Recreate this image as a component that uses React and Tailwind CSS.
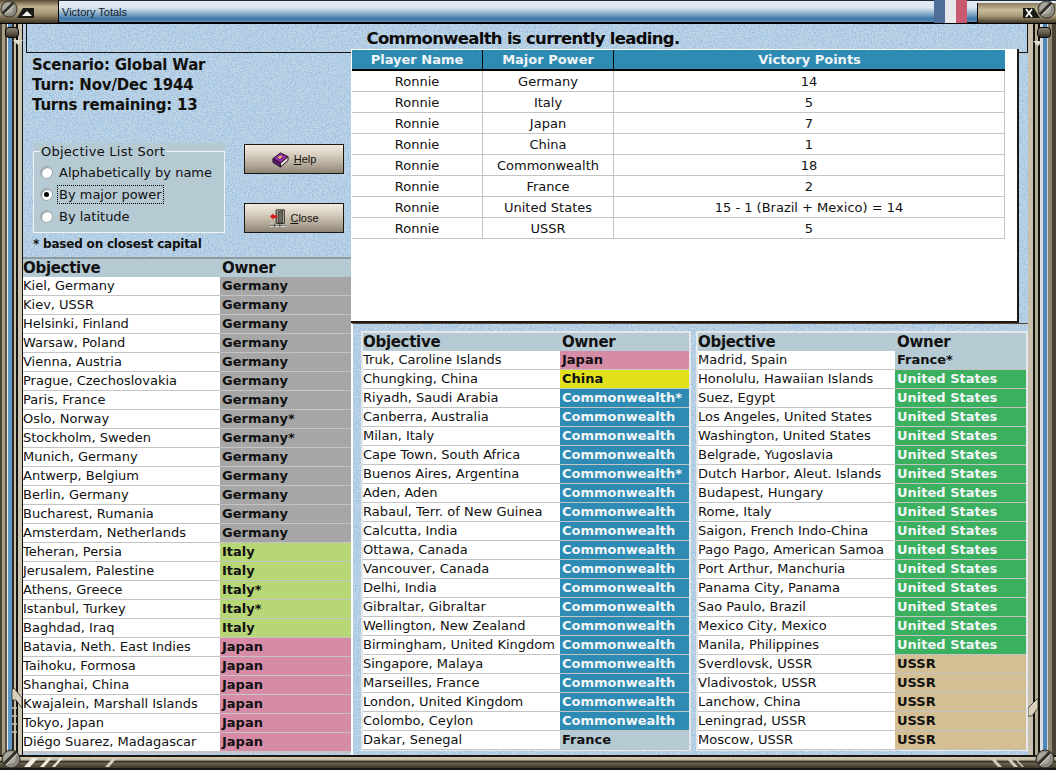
import { useId } from 'react';

const GER = 'bg-[#a6a6a6] text-[#111]';
const ITA = 'bg-[#b7d676] text-[#111]';
const JAP = 'bg-[#d68ca6] text-[#111]';
const CHI = 'bg-[#e2e21c] text-[#111]';
const COM = 'bg-[#2e8bb3] text-[#f2f6f8]';
const FRA = 'bg-[#b5cad3] text-[#111]';
const USA = 'bg-[#3bb05e] text-[#f2f6f8]';
const SOV = 'bg-[#d4bf94] text-[#111]';

const leftRows = [
  ['Kiel, Germany', 'Germany', GER],
  ['Kiev, USSR', 'Germany', GER],
  ['Helsinki, Finland', 'Germany', GER],
  ['Warsaw, Poland', 'Germany', GER],
  ['Vienna, Austria', 'Germany', GER],
  ['Prague, Czechoslovakia', 'Germany', GER],
  ['Paris, France', 'Germany', GER],
  ['Oslo, Norway', 'Germany*', GER],
  ['Stockholm, Sweden', 'Germany*', GER],
  ['Munich, Germany', 'Germany', GER],
  ['Antwerp, Belgium', 'Germany', GER],
  ['Berlin, Germany', 'Germany', GER],
  ['Bucharest, Rumania', 'Germany', GER],
  ['Amsterdam, Netherlands', 'Germany', GER],
  ['Teheran, Persia', 'Italy', ITA],
  ['Jerusalem, Palestine', 'Italy', ITA],
  ['Athens, Greece', 'Italy*', ITA],
  ['Istanbul, Turkey', 'Italy*', ITA],
  ['Baghdad, Iraq', 'Italy', ITA],
  ['Batavia, Neth. East Indies', 'Japan', JAP],
  ['Taihoku, Formosa', 'Japan', JAP],
  ['Shanghai, China', 'Japan', JAP],
  ['Kwajalein, Marshall Islands', 'Japan', JAP],
  ['Tokyo, Japan', 'Japan', JAP],
  ['Diégo Suarez, Madagascar', 'Japan', JAP],
];

const midRows = [
  ['Truk, Caroline Islands', 'Japan', JAP],
  ['Chungking, China', 'China', CHI],
  ['Riyadh, Saudi Arabia', 'Commonwealth*', COM],
  ['Canberra, Australia', 'Commonwealth', COM],
  ['Milan, Italy', 'Commonwealth', COM],
  ['Cape Town, South Africa', 'Commonwealth', COM],
  ['Buenos Aires, Argentina', 'Commonwealth*', COM],
  ['Aden, Aden', 'Commonwealth', COM],
  ['Rabaul, Terr. of New Guinea', 'Commonwealth', COM],
  ['Calcutta, India', 'Commonwealth', COM],
  ['Ottawa, Canada', 'Commonwealth', COM],
  ['Vancouver, Canada', 'Commonwealth', COM],
  ['Delhi, India', 'Commonwealth', COM],
  ['Gibraltar, Gibraltar', 'Commonwealth', COM],
  ['Wellington, New Zealand', 'Commonwealth', COM],
  ['Birmingham, United Kingdom', 'Commonwealth', COM],
  ['Singapore, Malaya', 'Commonwealth', COM],
  ['Marseilles, France', 'Commonwealth', COM],
  ['London, United Kingdom', 'Commonwealth', COM],
  ['Colombo, Ceylon', 'Commonwealth', COM],
  ['Dakar, Senegal', 'France', FRA],
];

const rightRows = [
  ['Madrid, Spain', 'France*', FRA],
  ['Honolulu, Hawaiian Islands', 'United States', USA],
  ['Suez, Egypt', 'United States', USA],
  ['Los Angeles, United States', 'United States', USA],
  ['Washington, United States', 'United States', USA],
  ['Belgrade, Yugoslavia', 'United States', USA],
  ['Dutch Harbor, Aleut. Islands', 'United States', USA],
  ['Budapest, Hungary', 'United States', USA],
  ['Rome, Italy', 'United States', USA],
  ['Saigon, French Indo-China', 'United States', USA],
  ['Pago Pago, American Samoa', 'United States', USA],
  ['Port Arthur, Manchuria', 'United States', USA],
  ['Panama City, Panama', 'United States', USA],
  ['Sao Paulo, Brazil', 'United States', USA],
  ['Mexico City, Mexico', 'United States', USA],
  ['Manila, Philippines', 'United States', USA],
  ['Sverdlovsk, USSR', 'USSR', SOV],
  ['Vladivostok, USSR', 'USSR', SOV],
  ['Lanchow, China', 'USSR', SOV],
  ['Leningrad, USSR', 'USSR', SOV],
  ['Moscow, USSR', 'USSR', SOV],
];

const totals = [
  ['Germany', '14'],
  ['Italy', '5'],
  ['Japan', '7'],
  ['China', '1'],
  ['Commonwealth', '18'],
  ['France', '2'],
  ['United States', '15 - 1 (Brazil + Mexico) = 14'],
  ['USSR', '5'],
];

const frameLeft =
  'bg-[linear-gradient(90deg,#4a4234_0,#4a4234_2px,#a69d86_2px,#a69d86_5px,#5d523e_5px,#5d523e_7px,#e8eef2_7px,#e8eef2_8px,#5e96c6_8px,#5e96c6_12px,#2a2a26_12px,#2a2a26_14px,#c6bda8_14px,#c6bda8_16px,#14120e_16px,#14120e_18px,#cdc5b3_18px,#cdc5b3_22px,#14120e_22px,#14120e_23px,#b7d0e4_23px)]';
const frameRight =
  'bg-[linear-gradient(90deg,#c9c1ae_0,#c9c1ae_5px,#14120e_5px,#14120e_7px,#b5ac96_7px,#b5ac96_10px,#14120e_10px,#14120e_12px,#d8dde0_12px,#d8dde0_15px,#4f86b8_15px,#4f86b8_19px,#d0d4d4_19px,#d0d4d4_20px,#8d8470_20px,#8d8470_24px,#4a4234_24px,#4a4234_28px)]';

// speckled blue paper behind the panels
const Texture = () => {
  const id = useId();
  return (
    <svg className="absolute inset-0 w-full h-full" aria-hidden="true">
      <filter id={id} x="0" y="0" width="100%" height="100%">
        <feTurbulence type="fractalNoise" baseFrequency="0.7" numOctaves="3" seed="4" />
        <feColorMatrix values="0 0 0 0 0.34  0 0 0 0 0.52  0 0 0 0 0.72  3.2 0 0 0 -1.3" />
      </filter>
      <rect width="100%" height="100%" fill="#bfd6e8" />
      <rect width="100%" height="100%" filter={`url(#${id})`} />
    </svg>
  );
};

const Screw = ({ className }) => (
  <svg viewBox="0 0 20 20" className={className}>
    <circle cx="10" cy="10" r="9" fill="#8c8a80" stroke="#2e2a22" />
    <circle cx="9" cy="9" r="6" fill="#aaa9a0" />
    <path d="M3 15 L15 3" stroke="#33312a" strokeWidth="3" />
    <path d="M5 16 L16 5" stroke="#dcdcd4" strokeWidth="1" />
  </svg>
);

const BookIcon = () => (
  <svg viewBox="0 0 18 18" className="w-[17px] h-[17px]">
    <path d="M1 8 L9 2 L17 6 L9 13 Z" fill="#8f2f9f" stroke="#1d0a24" />
    <path d="M1 8 L1 12 L9 17 L9 13 Z" fill="#5f1a70" stroke="#1d0a24" />
    <path d="M9 13 L9 17 L17 10 L17 6 Z" fill="#e8e0d0" stroke="#1d0a24" />
    <path d="M6 7 L9 5 L11 6 L8 8 Z" fill="#f0d840" />
  </svg>
);

const DoorIcon = () => (
  <svg viewBox="0 0 20 20" className="w-[18px] h-[18px]">
    <path d="M1 16 L19 16 L19 20 L1 20 Z" fill="#d8d8d0" />
    <path d="M1 18 H19 M6 16 V20 M12 16 V20" stroke="#222" strokeWidth="0.8" />
    <path d="M8 1 L17 1 L17 16 L8 16 Z" fill="#d0ccbc" stroke="#111" />
    <path d="M10 3 L15 2 L15 15 L10 15 Z" fill="#6e6a5c" stroke="#111" strokeWidth="0.7" />
    <path d="M1 8 L5 5 L5 7 L9 7 L9 10 L5 10 L5 12 Z" fill="#d81818" />
  </svg>
);

const GameButton = ({ icon, letter, rest, gap }) => (
  <button className={`w-[100px] h-[30px] flex items-center justify-center ${gap} border border-[#1a1712] bg-[linear-gradient(180deg,#f1eadf,#d8cfc0_35%,#b3a998_70%,#8d8475)] font-['Liberation_Sans',sans-serif] text-[11px] text-[#14120e]`}>
    {icon}
    <span>
      <span className="underline">{letter}</span>
      {rest}
    </span>
  </button>
);

const Radio = ({ checked, label, focus }) => (
  <div className="h-[22px] flex items-center">
    <span className="w-[13px] h-[13px] rounded-full bg-white border border-[#9aa6aa] shadow-[inset_1px_1px_1px_#8a9498] flex items-center justify-center">
      {checked && <span className="w-[5px] h-[5px] rounded-full bg-black" />}
    </span>
    <span className={`ml-[5px] pl-px pr-px leading-[17px] ${focus ? 'outline-1 outline-dotted outline-black' : ''}`}>
      {label}
    </span>
  </div>
);

const ObjectiveTable = ({ rows, nameWidth, className = '' }) => (
  <div className={className}>
    <div className="flex h-[18px] bg-[#b5cad3] items-center font-bold text-[15px] tracking-[-0.3px] text-[#111]">
      <div className={`${nameWidth} shrink-0`}>Objective</div>
      <div className="pl-[2px]">Owner</div>
    </div>
    {rows.map(([place, owner, color]) => (
      <div key={place} className="flex h-[19px] border-b border-[#c4c4c4] bg-white text-[13px] leading-[18px]">
        <div className={`${nameWidth} shrink-0 whitespace-nowrap text-[#111]`}>{place}</div>
        <div className={`flex-1 pl-[2px] font-bold whitespace-nowrap ${color}`}>{owner}</div>
      </div>
    ))}
  </div>
);

const App = () => {
  return (
    <div className="w-[1056px] h-[770px] overflow-hidden flex flex-col bg-[#14120e] font-['DejaVu_Sans',sans-serif] text-[#111]">
      {/* Title bar */}
      <div className="relative h-[24px] shrink-0 border-b-2 border-black bg-[linear-gradient(180deg,#1c2a34_0,#1c2a34_1px,#e2eaf2_1px,#dde6ef_35%,#8fb1cd_60%,#3f76a6_85%,#5c8db6)]">
        <div className="absolute left-[62px] top-[4px] font-['Liberation_Sans',sans-serif] text-[11px] leading-[16px] text-[#10202c]">
          Victory Totals
        </div>
        <div className="absolute left-0 top-0 w-[59px] h-[24px] border-r border-b border-black bg-[linear-gradient(180deg,#5a4c34,#c0b494_30%,#a49675_60%,#3f3524)]">
          <Screw className="absolute left-0 top-0 w-[18px] h-[18px]" />
          <svg viewBox="0 0 18 12" className="absolute left-[17px] top-[7px] w-[18px] h-[12px]">
            <path d="M0 11 L6 1 L17 1 L17 11 Z" fill="#1c1a14" />
            <path d="M5 9 L10 4 L15 9 Z" fill="#f4f4f0" />
          </svg>
        </div>
        <div className="absolute left-[934px] top-0 w-[33px] h-[23px] flex">
          <div className="flex-1 bg-[#4f6d97]" />
          <div className="flex-1 bg-[#e6e8ea]" />
          <div className="flex-1 bg-[#c85a70]" />
        </div>
        <div className="absolute left-[977px] top-[3px] w-[79px] h-[20px] border-l border-black bg-[linear-gradient(180deg,#8a7c5c,#c8bc9c_35%,#a89a78_65%,#3f3524)]">
          <svg viewBox="0 0 18 12" className="absolute left-[45px] top-[4px] w-[18px] h-[12px]">
            <path d="M0 1 L11 1 L17 11 L0 11 Z" fill="#1c1a14" />
            <path d="M3 2 L9 10 M9 2 L3 10" stroke="#fff" strokeWidth="1.8" />
          </svg>
          <Screw className="absolute right-0 top-[-3px] w-[19px] h-[19px]" />
        </div>
      </div>

      {/* Middle */}
      <div className="flex flex-1 min-h-0">
        <div className={`relative w-[24px] shrink-0 ${frameLeft}`}>
          <div className="absolute left-[5px] top-[3px] w-[14px] h-[11px] rounded-sm bg-[linear-gradient(180deg,#8f8672,#3a3428)] border border-black" />
          <div className="absolute left-[13px] top-[16px] w-0 h-0 border-l-[5px] border-r-[5px] border-t-[5px] border-l-transparent border-r-transparent border-t-[#e0dccc]" />
          <svg viewBox="0 0 24 60" className="absolute left-0 top-[662px] w-[24px] h-[60px]">
            <path d="M12 4 L14 2 L22 12 L22 22 L16 14 L12 14 Z" fill="#d8d0bc" stroke="#1a1712" strokeWidth="0.7" />
            <path d="M12 22 H17 M12 30 H17 M12 38 H17 M12 46 H17" stroke="#cdc5b3" strokeWidth="1.4" />
          </svg>
        </div>

        <div className="relative flex-1 min-w-0">
          <Texture />
          <div className="relative ml-[2px] h-[29px] border-l border-r border-b border-[#14120e] pt-[5px] pr-[8px] text-center text-[16.5px] tracking-[-0.7px] leading-[20px] font-bold text-[#0c0a08]">
            Commonwealth is currently leading.
          </div>

          <div className="relative flex">
            {/* Left column */}
            <div className="w-[327px] shrink-0">
              <div className="pl-[8px] pt-[2px] text-[15px] tracking-[-0.2px] leading-[20px] font-bold text-[#12100c]">
                <div>Scenario: Global War</div>
                <div>Turn: Nov/Dec 1944</div>
                <div>Turns remaining: 13</div>
              </div>

              <div className="flex mt-[28px] ml-[9px]">
                <div className="w-[192px] h-[90px] bg-[#b5cad3]">
                  <fieldset className="h-[90px] border border-[#f0f4f6] pl-[6px] text-[13px]">
                    <legend className="ml-0 px-px leading-[17px] tracking-[0.25px]">Objective List Sort</legend>
                    <div className="mt-[1px]">
                      <Radio label="Alphabetically by name" />
                      <Radio checked focus label="By major power" />
                      <Radio label="By latitude" />
                    </div>
                  </fieldset>
                </div>
                <div className="ml-[19px] mt-[1px] flex flex-col gap-[29px]">
                  <GameButton icon={<BookIcon />} letter="H" rest="elp" gap="gap-[5px]" />
                  <GameButton icon={<DoorIcon />} letter="C" rest="lose" gap="gap-[3px]" />
                </div>
              </div>

              <div className="ml-[9px] mt-[3px] text-[12px] tracking-[-0.2px] leading-[16px] font-bold text-[#12100c]">
                * based on closest capital
              </div>

              <ObjectiveTable
                rows={leftRows}
                nameWidth="w-[197px]"
                className="-ml-px mt-[5px] border-t-2 border-[#8f9aa0] border-b border-b-[#c4c4c4]"
              />
            </div>

            {/* Right column */}
            <div className="flex-1 -mt-[4px] min-w-0">
              <div className="w-[668px] h-[274px] bg-white border-r-2 border-b-2 border-[#1d1814] pl-px pt-px">
                <div className="flex h-[21px] w-[653px] bg-[#2e8bb3] border-b-2 border-black text-[13px] leading-[19px] font-bold text-[#f0f5f8] text-center">
                  <div className="w-[131px] border-r border-black">Player Name</div>
                  <div className="w-[131px] border-r border-black">Major Power</div>
                  <div className="flex-1">Victory Points</div>
                </div>
                {totals.map(([power, points]) => (
                  <div key={power} className="flex w-[653px] h-[21px] border-b border-r border-[#c4c4c4] text-[13px] leading-[21px] text-[#111] text-center">
                    <div className="w-[131px] border-r border-[#c4c4c4]">Ronnie</div>
                    <div className="w-[131px] border-r border-[#c4c4c4]">{power}</div>
                    <div className="flex-1">{points}</div>
                  </div>
                ))}
              </div>

              <div className="flex gap-[5px] border-l-2 border-white pt-[7px] pl-[8px] h-[433px] border-t border-t-[#5a4a3c]">
                <ObjectiveTable rows={midRows} nameWidth="w-[197px]" className="w-[330px] h-[420px] border-2 border-[#e4e8ea] bg-white" />
                <ObjectiveTable rows={rightRows} nameWidth="w-[197px]" className="w-[332px] h-[420px] border-2 border-[#e4e8ea] bg-white" />
              </div>
            </div>
          </div>
        </div>

        <div className={`relative w-[28px] shrink-0 ${frameRight}`}>
          <div className="absolute left-[9px] top-[3px] w-[14px] h-[11px] rounded-sm bg-[linear-gradient(180deg,#8f8672,#3a3428)] border border-black" />
          <div className="absolute left-[5px] top-[17px] w-0 h-0 border-l-[5px] border-r-[5px] border-t-[5px] border-l-transparent border-r-transparent border-t-[#e0dccc]" />
          <svg viewBox="0 0 28 40" className="absolute left-0 top-[670px] w-[28px] h-[40px]">
            <path d="M0 14 L10 4 L10 14 L4 22 L0 22 Z" fill="#d8d0bc" stroke="#1a1712" strokeWidth="0.7" />
          </svg>
        </div>
      </div>

      {/* Bottom frame */}
      <div className="relative h-[15px] shrink-0 border-y-2 border-[#1a1712] bg-[linear-gradient(180deg,#d4ccb8,#bdb49e_30%,#2a261e_35%,#6a604a_60%,#3a3428)]">
        <Screw className="absolute left-[1px] top-[-8px] w-[20px] h-[20px]" />
        <svg viewBox="0 0 100 11" className="absolute left-[24px] top-0 w-[100px] h-[11px]">
          <path d="M0 10 L8 1 L14 1 L6 10 Z M16 10 L24 1 L28 1 L20 10 Z M28 10 L36 1 L39 1 L31 10 Z" fill="#f0ece0" />
          <path d="M81 10 L89 1 L93 1 L85 10 Z" fill="#d4ccb8" />
        </svg>
        <svg viewBox="0 0 36 11" className="absolute left-[990px] top-0 w-[36px] h-[11px]">
          <path d="M0 1 L4 1 L12 10 L8 10 Z M16 1 L20 1 L28 10 L24 10 Z M24 1 L26 1 L34 10 L32 10 Z" fill="#d4ccb8" />
        </svg>
        <Screw className="absolute right-[1px] top-[-8px] w-[20px] h-[20px]" />
      </div>
    </div>
  );
};

export default App;
